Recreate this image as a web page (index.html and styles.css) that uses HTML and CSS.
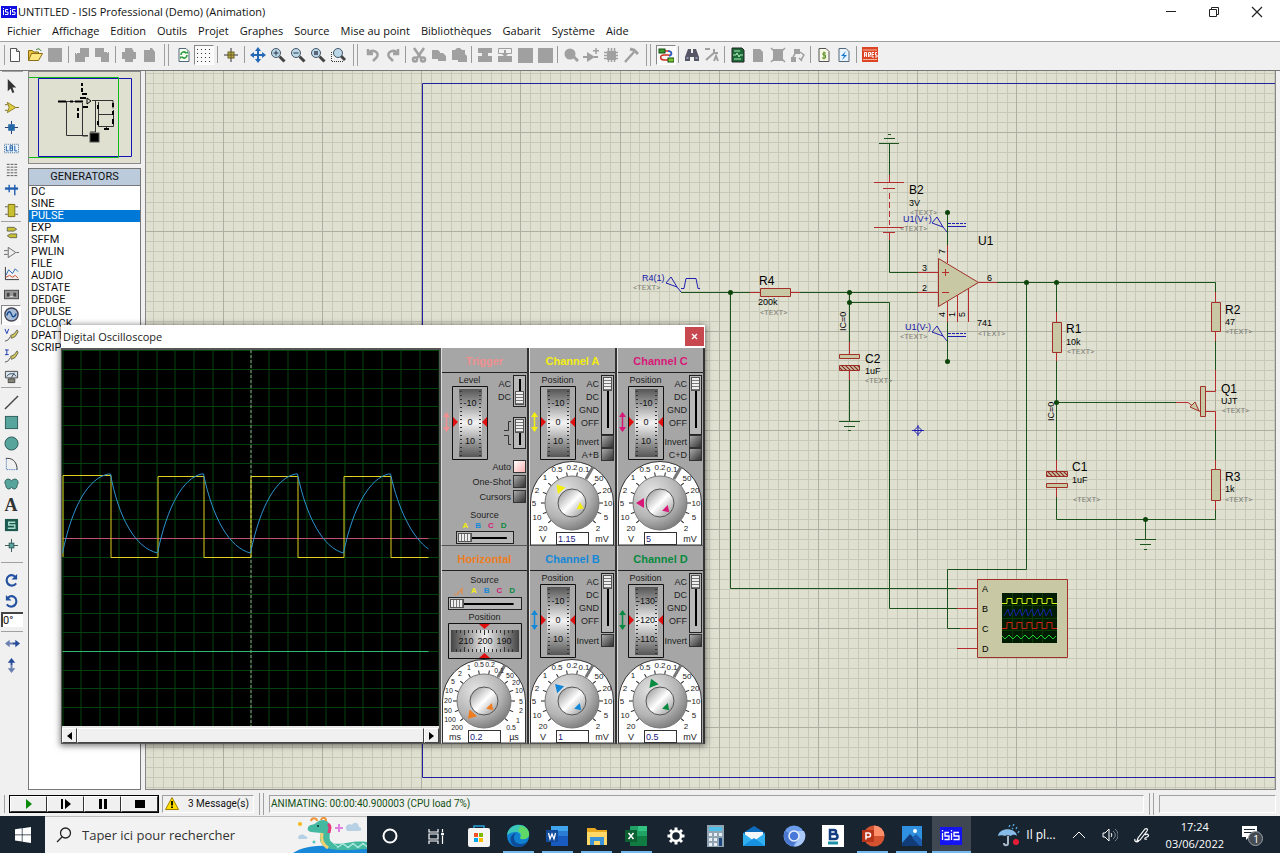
FILE: index.html
```
<!DOCTYPE html>
<html lang="fr">
<head>
    <meta charset="UTF-8">
    <meta name="viewport" content="width=device-width, initial-scale=1.0">
    <title>UNTITLED - ISIS Professional</title>
    <link rel="stylesheet" href="styles.css">
</head>
<body>
    <header class="titlebar">
        <svg class="app-icon" width="16" height="12" viewBox="0 0 16 12"><rect width="16" height="12" fill="#1010e0"/><path d="M2.5 4v5M2.5 2v1M7 3.500H4.500v2.500H7v2.500H4M9.500 4v5M9.500 2v1M14.500 3.500H11.500v2.500h2.500v2.500H11" fill="none" stroke="#fff"/></svg>
        <h1>UNTITLED - ISIS Professional (Demo) (Animation)</h1>
        <div class="window-buttons">
            <button aria-label="Réduire"><svg width="12" height="12"><path d="M1 5.500h10" stroke="#222"/></svg></button>
            <button aria-label="Restaurer"><svg width="12" height="12"><path d="M1.500 3.500h7v7h-7zM3.500 3V1.500h7v7H9" fill="none" stroke="#222"/></svg></button>
            <button aria-label="Fermer"><svg width="12" height="12"><path d="M1 1l10 10M11 1L1 11" stroke="#222" stroke-width="1.200"/></svg></button>
        </div>
    </header>

    <nav class="menubar">
        <button>Fichier</button>
        <button>Affichage</button>
        <button>Edition</button>
        <button>Outils</button>
        <button>Projet</button>
        <button>Graphes</button>
        <button>Source</button>
        <button>Mise au point</button>
        <button>Bibliothèques</button>
        <button>Gabarit</button>
        <button>Système</button>
        <button>Aide</button>
    </nav>

    <div class="toolbar">
        <div class="tools">
            <button aria-label="Nouveau"><svg viewBox="0 0 16 16"><path d="M3.500 1.500h6l3 3v10h-9z" fill="#fff" stroke="#555"/><path d="M9.500 1.500v3h3" fill="#ddd" stroke="#555"/></svg></button>
            <button aria-label="Ouvrir"><svg viewBox="0 0 16 16"><path d="M1.500 13.500v-10h4l1 1.500h5v2" fill="#e8c040" stroke="#8a6d10"/><path d="M1.500 13.500l3-7h11l-4 7z" fill="#ffe680" stroke="#8a6d10"/><path d="M9 3c2-2 4-1 5 1" fill="none" stroke="#2a6d2a"/></svg></button>
            <button aria-label="Enregistrer"><svg viewBox="0 0 16 16"><path d="M1 1h14v14H2l-1-1z" fill="#a0a0a0"/></svg></button>
            <i class="sep"></i>
            <button aria-label="Importer"><svg viewBox="0 0 16 16" fill="#a0a0a0"><path d="M6 1h9v9h-4v5H1V6h5z"/><path d="M5 4l-3 3" stroke="#f0f0f0"/></svg></button>
            <button aria-label="Exporter"><svg viewBox="0 0 16 16" fill="#a0a0a0"><path d="M1 1h9v4h5v10H7v-5H1z"/><path d="M11 3l3 3" stroke="#f0f0f0"/></svg></button>
            <i class="sep"></i>
            <button aria-label="Imprimer"><svg viewBox="0 0 16 16" fill="#a0a0a0"><path d="M4 1h7l2 4h2v7h-3v3H4v-3H1V5h3z"/></svg></button>
            <button aria-label="Zone"><svg viewBox="0 0 16 16" fill="#a0a0a0"><path d="M3 3h6V1h2l3 4v10H3z"/></svg></button>
        </div>
        <i class="grip"></i>
        <div class="tools">
            <button aria-label="Redessiner"><svg viewBox="0 0 16 16"><path d="M3 1.500h7l3 3v10H3z" fill="#f4fff4" stroke="#567"/><path d="M5 8c0-3 3-4 5-2M11 8c0 3-3 4-5 2" fill="none" stroke="#2c9a3a" stroke-width="1.600"/><path d="M9 6.500h3V4zM7 9.500H4V12z" fill="#2c9a3a"/></svg></button>
            <button class="pressed" aria-label="Grille"><svg viewBox="0 0 16 16"><path d="M1 2.500h15M1 6.500h15M1 10.500h15M1 14.500h15" stroke="#333" stroke-dasharray="1 3"/></svg></button>
            <i class="sep"></i>
            <button aria-label="Origine"><svg viewBox="0 0 16 16"><path d="M8 1v14M1 8h14" stroke="#333"/><rect x="5" y="5" width="6" height="6" fill="#b8a848" stroke="#6a6020"/><path d="M8 5v6M5 8h6" stroke="#6a6020"/></svg></button>
            <i class="sep"></i>
            <button aria-label="Centrer"><svg viewBox="0 0 16 16" fill="#2468b8"><path d="M8 0l3 4H9v3h3V5l4 3-4 3V9H9v3h2l-3 4-3-4h2V9H4v2L0 8l4-3v2h3V4H5z"/></svg></button>
            <button aria-label="Zoom avant"><svg viewBox="0 0 16 16"><path d="M9.500 9.500l5 5" stroke="#444" stroke-width="3"/><circle cx="6" cy="6" r="4.500" fill="#bcd8e8" stroke="#456"/><path d="M6 3.500v5M3.500 6h5" stroke="#234"/></svg></button>
            <button aria-label="Zoom arrière"><svg viewBox="0 0 16 16"><path d="M9.500 9.500l5 5" stroke="#444" stroke-width="3"/><circle cx="6" cy="6" r="4.500" fill="#bcd8e8" stroke="#456"/><path d="M3.500 6h5" stroke="#234"/></svg></button>
            <button aria-label="Zoom tout"><svg viewBox="0 0 16 16"><path d="M9.500 9.500l5 5" stroke="#444" stroke-width="3"/><circle cx="6" cy="6" r="4.500" fill="#bcd8e8" stroke="#456"/><rect x="4" y="4" width="4" height="4" fill="#567"/></svg></button>
            <button aria-label="Zoom zone"><svg viewBox="0 0 16 16"><path d="M1.500 5v9.500H13" fill="none" stroke="#333" stroke-dasharray="1 1"/><path d="M11 9l4 4" stroke="#444" stroke-width="3"/><circle cx="8" cy="6" r="4.500" fill="#bcd8e8" stroke="#456"/></svg></button>
        </div>
        <i class="grip"></i>
        <div class="tools tight">
            <button aria-label="Annuler"><svg viewBox="0 0 16 16" fill="none" stroke="#a0a0a0" stroke-width="2.500"><path d="M3 2v5h5M3 7c4-6 12-2 9 3l-4 4"/></svg></button>
            <button aria-label="Rétablir"><svg viewBox="0 0 16 16" fill="none" stroke="#a0a0a0" stroke-width="2.500"><path d="M13 2v5H8M13 7C9 1 1 5 4 10l4 4"/></svg></button>
            <i class="sep"></i>
            <button aria-label="Couper"><svg viewBox="0 0 16 16" fill="none" stroke="#a0a0a0" stroke-width="2.500"><path d="M3 1l7 10M13 1L6 11"/><circle cx="4" cy="12.500" r="2"/><circle cx="12" cy="12.500" r="2"/></svg></button>
            <button aria-label="Copier"><svg viewBox="0 0 16 16" fill="#a0a0a0"><path d="M1 3h6l2 2v1h3l3 3v5H7v-2H1z"/></svg></button>
            <button aria-label="Coller"><svg viewBox="0 0 16 16" fill="#a0a0a0"><path d="M1 3h3l2-2h3l2 2h3v4l2 2v6H7v-2H1z"/></svg></button>
            <i class="sep"></i>
            <button aria-label="Bloc copier"><svg viewBox="0 0 16 16" fill="#a0a0a0"><path d="M1 1h14v5h-4v3h4v6H1V9h4V6H1z"/></svg></button>
            <button aria-label="Bloc déplacer"><svg viewBox="0 0 16 16" fill="#a0a0a0"><path d="M1.500 1.500h13v5h-13z" fill="none" stroke="#a0a0a0"/><path d="M7 3h2v3h3L9 9h6v6H1V9h6L4 6h3z"/></svg></button>
            <button aria-label="Bloc tourner"><svg viewBox="0 0 16 16" fill="#a0a0a0"><path d="M1 1h15v15H1z"/></svg></button>
            <button aria-label="Bloc effacer"><svg viewBox="0 0 16 16" fill="#a0a0a0"><path d="M1 1h15v15H1z"/></svg></button>
            <i class="sep"></i>
            <button aria-label="Prendre"><svg viewBox="0 0 16 16" fill="#a0a0a0"><circle cx="7" cy="7" r="5.500"/><path d="M10 9l5 5" stroke="#a0a0a0" stroke-width="3"/></svg></button>
            <button aria-label="Créer"><svg viewBox="0 0 16 16" fill="#a0a0a0"><path d="M4 5l8 5-8 5zM0 9h4v2H0zM11 9h4v2h-4zM10 3h6v1.500h-6zM12.300 1h1.500v6h-1.500z"/></svg></button>
            <button aria-label="Empreinte"><svg viewBox="0 0 16 16" fill="#a0a0a0"><path d="M4 4h9v9H4z"/><path d="M5.500 1v14M8.500 1v14M11.500 1v14M1 5.500h14M1 8.500h14M1 11.500h14" stroke="#a0a0a0" stroke-width="1.500"/></svg></button>
            <button aria-label="Décomposer"><svg viewBox="0 0 16 16" fill="none" stroke="#a0a0a0"><path d="M2 15L11 5" stroke-width="2.500"/><path d="M7 2l4 1 4 4" stroke-width="3"/></svg></button>
        </div>
        <i class="grip"></i>
        <div class="tools tight">
            <button class="pressed" aria-label="Routage"><svg viewBox="0 0 16 16"><path d="M5 4h5c5 0 4 5 0 4H6c-5 0-4 5 0 5h5" fill="none" stroke="#d03020" stroke-width="1.500"/><path d="M10 4c4 0 5 4 1 5" fill="none" stroke="#2060d0" stroke-width="1.500"/><rect x="1" y="2" width="6" height="4" fill="#3a9a30" stroke="#174a10"/><rect x="10" y="11" width="6" height="4" fill="#7ac830" stroke="#174a10"/></svg></button>
            <i class="sep"></i>
            <button aria-label="Chercher"><svg viewBox="0 0 16 16" fill="#556"><path d="M4 2h3v4h2V2h3l3 8v4h-5v-4H6v4H1v-4z"/><path d="M2.500 11h2M11.500 11h2" stroke="#cde"/></svg></button>
            <button aria-label="Propriétés"><svg viewBox="0 0 16 16" fill="none" stroke="#a0a0a0" stroke-width="2"><path d="M2 13L11 5M10 2v4h4M1 2h5M10 14l2-5 2 5"/></svg></button>
            <i class="sep"></i>
            <button aria-label="Explorer"><svg viewBox="0 0 16 16"><path d="M2 1h10l2 2v12H2z" fill="#1c6a38" stroke="#222"/><path d="M4 4h6M4 12h7M3 8h3l1-2 2 4 1-2h3" fill="none" stroke="#aef0b8"/></svg></button>
            <button aria-label="Feuille"><svg viewBox="0 0 16 16" fill="#a0a0a0"><path d="M3 2h7l3 3v10H3z"/></svg></button>
            <button aria-label="Supprimer feuille"><svg viewBox="0 0 16 16" fill="#a0a0a0"><path d="M3 2h10v12H3z"/><path d="M1 1l14 14M15 1L1 15" stroke="#a0a0a0" stroke-width="1.500"/></svg></button>
            <button aria-label="Parent"><svg viewBox="0 0 16 16" fill="#a0a0a0"><path d="M1 10h5v5H1zM4 2h6v5H4z"/><path d="M3 10l3-5M10 5l4 3-3 5M9 11l3 3" fill="none" stroke="#a0a0a0" stroke-width="1.500"/></svg></button>
            <i class="sep"></i>
            <button aria-label="Nomenclature"><svg viewBox="0 0 16 16"><path d="M3 1.500h7l3 3v10H3z" fill="#f8f8e8" stroke="#555"/><path d="M10 6H7v2h2.500v3H6M8 4.500v8" fill="none" stroke="#5a9020"/></svg></button>
            <button aria-label="Règles électriques"><svg viewBox="0 0 16 16"><path d="M3 1.500h7l3 3v10H3z" fill="#e8f4ff" stroke="#567"/><path d="M10 4L5 9h3l-2 4 5-5H8z" fill="#1878d0"/></svg></button>
            <i class="sep"></i>
            <button aria-label="ARES"><svg viewBox="0 0 16 16"><rect width="16" height="15" fill="#dc4424"/><path d="M1 3h14M1 12.500h14" stroke="#f8b8a0"/><path d="M2.500 10V5.500h2V10M2.500 8h2M6.500 10V5.500h2V8h-2l2 2M12 5.500h-2V10h2M10 7.500h2M15 5.500h-1.500V8H15v2h-2" fill="none" stroke="#fff"/></svg></button>
        </div>
    </div>

    <main class="workspace">
        <aside class="modes">
            <div class="mode-group">
                <button aria-label="Sélection"><svg viewBox="0 0 16 16"><path d="M4 0v13l3-3 2 5 2-1-2-5h4z" fill="#333"/></svg></button>
                <button aria-label="Composant"><svg viewBox="0 0 16 16"><path d="M1 5h3M1 11h3M12 8h4" stroke="#776a20"/><path d="M3.500 2.500l9 5.500-9 5.500 2-5.500z" fill="#e0d040" stroke="#8a7a20"/></svg></button>
                <button aria-label="Jonction"><svg viewBox="0 0 16 16"><path d="M8 1v14M1 8h14" stroke="#236"/><rect x="4.500" y="4.500" width="7" height="7" fill="#2468a8"/></svg></button>
                <button aria-label="Label"><svg viewBox="0 0 16 16"><path d="M.5 3.500h15v9H.5z" fill="#e8f4ff" stroke="#468" stroke-dasharray="1 1"/><path d="M2.500 5v5.500H5M6.500 5v5.500H9V5zM6.500 7.500H9M11.500 5v5.500H14" fill="none" stroke="#1858a0"/></svg></button>
                <button aria-label="Script"><svg viewBox="0 0 16 16"><path d="M3 2.500h11M3 5.500h11M3 8.500h11M3 11.500h11M3 14.500h11" stroke="#555" stroke-dasharray="3 1"/></svg></button>
                <button aria-label="Bus"><svg viewBox="0 0 16 16"><path d="M1 7h14" stroke="#2060b0" stroke-width="2.500"/><path d="M5.500 3v8M11.500 3v11" stroke="#2060b0" stroke-width="1.500"/></svg></button>
                <button aria-label="Sous-circuit"><svg viewBox="0 0 16 16"><path d="M1 4h3M1 12h3M12 4h3M12 12h3" stroke="#555"/><path d="M4.500 1.500h7v13h-7z" fill="#c8c030" stroke="#776a10"/></svg></button>
            </div>
            <div class="mode-group group-devices">
                <button aria-label="Terminal"><svg viewBox="0 0 16 16" fill="#c8c030" stroke="#665"><path d="M3.500 2.500h7l3 2-3 2h-7zM13.500 9.500h-7l-3 2 3 2h7z"/></svg></button>
                <button aria-label="Pin"><svg viewBox="0 0 16 16" fill="none" stroke="#666"><path d="M4.500 2.500l8 5.500-8 5.500zM0 6h4M0 10h4M13 8h3"/></svg></button>
                <button aria-label="Graphe"><svg viewBox="0 0 16 16" fill="none"><path d="M1.500 1v13.500H16" stroke="#333"/><path d="M2 10l3-6 4 4 3-5 3 3" stroke="#2060b0"/><path d="M2 12l4-2 3 2 3-2 3 3" stroke="#d04020"/></svg></button>
                <button aria-label="Magnétophone"><svg viewBox="0 0 16 16"><rect x=".5" y="3.500" width="15" height="9" fill="#999" stroke="#444"/><path d="M3 6h3v4H3zM10 6h3v4h-3z" fill="#444"/><path d="M6 10h4" stroke="#ddd"/></svg></button>
                <button class="pressed" aria-label="Générateur"><svg viewBox="0 0 16 16"><circle cx="8" cy="8" r="7" fill="#a8bcd8" stroke="#445" stroke-width="1.500"/><path d="M3 9c2-6 4-4 5-1s3 4 5-1" fill="none" stroke="#124a90" stroke-width="1.500"/></svg></button>
                <button aria-label="Sonde tension"><svg viewBox="0 0 16 16" fill="none"><path d="M1 1l2 5 2-5" stroke="#1838b0"/><path d="M1 14l3-1 3-4" stroke="#555"/><path d="M7 8l4-2 3-4 1 2-3 5-4 2z" fill="#d0c850" stroke="#665"/></svg></button>
                <button aria-label="Sonde courant"><svg viewBox="0 0 16 16" fill="none"><path d="M1 1h4M3 1v5M1 6h4" stroke="#1838b0"/><path d="M1 14l3-1 3-4" stroke="#555"/><path d="M7 8l4-2 3-4 1 2-3 5-4 2z" fill="#d0c850" stroke="#665"/></svg></button>
                <button aria-label="Instruments"><svg viewBox="0 0 16 16"><path d="M1.500 2.500h13v7h-13z" fill="#d8e4ec" stroke="#444"/><path d="M3 8c2-4 8-4 10 0M8 9l3-5" fill="none" stroke="#345"/><path d="M4.500 10.500h7v4h-7z" fill="#887" stroke="#444"/></svg></button>
            </div>
            <div class="mode-group group-draw">
                <button aria-label="Ligne"><svg viewBox="0 0 16 16"><path d="M1 15L15 1" stroke="#444" stroke-width="1.500"/></svg></button>
                <button aria-label="Rectangle"><svg viewBox="0 0 16 16"><rect x="1.500" y="1.500" width="13" height="13" fill="#56a49c" stroke="#2c5a58"/></svg></button>
                <button aria-label="Cercle"><svg viewBox="0 0 16 16"><circle cx="8" cy="8" r="7" fill="#56a49c" stroke="#2c5a58"/></svg></button>
                <button aria-label="Arc"><svg viewBox="0 0 16 16" fill="none"><path d="M2 2.500h2c6 0 10 5 10 12" stroke="#333"/><path d="M2.500 3v11.500H14" stroke="#2060b0" stroke-dasharray="1 1"/></svg></button>
                <button aria-label="Chemin"><svg viewBox="0 0 16 16"><path d="M8 4C5 1 1 2 1 6c0 2 1 2 1 3 0 4 4 5 6 2 2 3 6 2 6-2 0-1 1-1 1-3 0-4-4-5-7-2z" fill="#56a49c" stroke="#2c5a58"/></svg></button>
                <button class="glyph" aria-label="Texte">A</button>
                <button aria-label="Symbole"><svg viewBox="0 0 16 16"><rect x="1" y="1" width="14" height="13" fill="#1c5a50"/><path d="M12 4.500H5v3h6.500v3.500H4" fill="none" stroke="#a8e0d0" stroke-width="1.500"/></svg></button>
                <button aria-label="Marqueur"><svg viewBox="0 0 16 16"><path d="M8 1v14M1 8h14" stroke="#355"/><rect x="5.500" y="5.500" width="5" height="5" fill="#56a49c" stroke="#2c5a58"/></svg></button>
            </div>
            <div class="mode-rotate">
                <button aria-label="Rotation horaire"><svg viewBox="0 0 16 16"><path d="M12 4C7 0 2 4 3 9s7 6 10 2" fill="none" stroke="#2450a0" stroke-width="2.200"/><path d="M14 1v6H8z" fill="#2450a0"/></svg></button>
                <button aria-label="Rotation anti-horaire"><svg viewBox="0 0 16 16"><path d="M4 4c5-4 10 0 9 5s-7 6-10 2" fill="none" stroke="#2450a0" stroke-width="2.200"/><path d="M2 1v6h6z" fill="#2450a0"/></svg></button>
                <input type="text" value="0°" aria-label="Angle">
                <button class="after-angle" aria-label="Miroir horizontal"><svg viewBox="0 0 16 16"><path d="M0 8l5-4v3h3v2H5v3z" fill="#6a80b0"/><path d="M16 8l-5-4v3H8v2h3v3z" fill="#244a98"/></svg></button>
                <button aria-label="Miroir vertical"><svg viewBox="0 0 16 16"><path d="M8 0l4 5H9v3H7V5H4z" fill="#244a98"/><path d="M8 16l4-5H9V8H7v3H4z" fill="#6a80b0"/></svg></button>
            </div>
        </aside>

        <aside class="sidebar">
            <div class="overview">
                <svg width="111" height="91" viewBox="29 72 111 91" fill="none">
                    <path d="M38.500 78.500h93v78h-93z" stroke="#1414b4"/>
                    <path d="M28 77.500h90.500v80H28" stroke="#10b818"/>
                    <path d="M66.500 102v33.500H88M82.500 103v33H88M66 101.500h17M92 100.500h21v8M95.500 100v32H90M98.500 102v24.500h15V110M98 114.500h14M106.500 127v3" stroke="#333"/>
                    <path d="M58 101.500h8M70 101.500h3M75 101.500h8M78 108v3M78 113v5M82 83v3M82 88v4M82 94h5M83 107h5M98 105v4M113 103v4M113 111v4M113 119v5M98 121v4M80 98h6M104 129h5" stroke="#000" stroke-width="2"/>
                    <path d="M87 98l4 3-4 3z" stroke="#000"/>
                    <rect x="90" y="133" width="9" height="9" fill="#000" stroke="#555"/>
                </svg>
            </div>
            <h2>GENERATORS</h2>
            <ul class="device-list">
                <li>DC</li>
                <li>SINE</li>
                <li class="selected">PULSE</li>
                <li>EXP</li>
                <li>SFFM</li>
                <li>PWLIN</li>
                <li>FILE</li>
                <li>AUDIO</li>
                <li>DSTATE</li>
                <li>DEDGE</li>
                <li>DPULSE</li>
                <li>DCLOCK</li>
                <li>DPATTERN</li>
                <li>SCRIPTABLE</li>
            </ul>
        </aside>

        <section class="sheet">
            <svg class="schematic" id="schematic">
                <defs>
                    <pattern id="hatch" width="4" height="4" patternUnits="userSpaceOnUse"><path d="M0 0l4 4M-1 3l2 2M3-1l2 2" stroke="#8c2020" stroke-width="1.200"/></pattern>
                    <g id="probe"><path d="M-15-9l5-6 6 10zM-4-5l4 5"/></g>
                </defs>
                <g transform="translate(-146 -71)">
                    <path id="gridMinor" class="grid-minor"/>
                    <path id="gridMajor" class="grid-major"/>
                    <path class="sheet-edge" d="M1275.500 83.500h-853v694h853"/>

                    <!-- wires -->
                    <g class="wire">
                        <path d="M889.500 175v-31.500M879 143.500h20M884 138.500h11M888 134.500h3"/>
                        <path d="M889.500 240v32.500H918M681 292.500h69M800 292.500h118M730.500 292v296.500H957M849.500 292v50M849 302.500h40.500v306H957M849.500 380v41.500M839 421.500h21M844 426.500h11M848 430.500h3"/>
                        <path d="M947.500 212v33M947.500 322v39M997 282.500h218.500V292M1026.500 282v287.500h-79v59H960M1056.500 282v30M1056.500 361v99M1057 402.500h119"/>
                        <path d="M1215.500 341v29M1215.500 430v30M1056.500 497v22.500h159V510M1145.500 519v20.500M1135 539.500h21M1140 544.500h11M1144 549.500h3"/>
                    </g>
                    <g class="node">
                        <circle cx="730.500" cy="292.500" r="2.500"/><circle cx="849.500" cy="292.500" r="2.500"/><circle cx="849.500" cy="302.500" r="2.500"/>
                        <circle cx="947.500" cy="212.500" r="2.500"/><circle cx="947.500" cy="361.500" r="2.500"/><circle cx="1026.500" cy="282.500" r="2.500"/>
                        <circle cx="1056.500" cy="282.500" r="2.500"/><circle cx="1056.500" cy="402.500" r="2.500"/><circle cx="1145.500" cy="519.500" r="2.500"/>
                    </g>

                    <!-- component pins and bodies -->
                    <g class="pin">
                        <path d="M889.500 175v8M874 182.500h30M883 188.500h12M874 227.500h30M883 232.500h12M889.500 233v7"/>
                        <path d="M889.500 193v32" stroke-dasharray="6 3"/>
                        <path d="M918 272.500h20M918 292.500h20M978 282.500h19M947.500 245v18M947.500 301v21M957.500 295v27M968.500 288v34"/>
                        <path d="M750 292.500h10M790 292.500h10M849.500 342v12M849.500 370v10M1056.500 312v10M1056.500 352v9M1056.500 460v11M1056.500 487v10"/>
                        <path d="M1215.500 292v10M1215.500 331v10M1215.500 460v9M1215.500 500v10M1215.500 370v21.500H1206M1206 411.500h9.500V430M1176 402.500h12l12 9"/>
                        <path d="M957 588.500h20M957 608.500h20M960 628.500h17M957 648.500h20"/>
                    </g>
                    <g class="body">
                        <path d="M938.500 258.500l40 24-40 24z"/>
                        <path d="M760.500 288.500h30v8h-30zM1052.500 322.500h9v30h-9zM1211.500 302.500h9v29h-9zM1211.500 469.500h9v31h-9zM1200.500 386.500h5v30h-5z"/>
                        <path d="M839.500 354.500h20v4h-20zM839.500 365.500h20v5h-20zM1046.500 471.500h21v5h-21zM1046.500 483.500h21v4h-21z"/>
                        <path d="M1190 407l5-5 4 9z"/>
                        <path d="M977.500 579.500h90v78h-90z"/>
                    </g>
                    <path class="hatched" d="M839.500 365.500h20v5h-20zM1046.500 471.500h21v5h-21z"/>
                    <path class="pin" d="M942 272.500h7M945.500 269v7M942 292.500h7"/>

                    <!-- generators and origin marker -->
                    <g class="generator">
                        <use href="#probe" x="681" y="292"/><use href="#probe" x="947" y="232"/><use href="#probe" x="947" y="341"/>
                        <path d="M681 288.500h3l2-10h10l2 10h2M948 226.500h18M948 336.500h18"/>
                        <path d="M948 223.500h18M948 333.500h18" stroke-dasharray="3 1"/>
                        <path d="M918 425v11M912 430.500h12M914 430.500l4-4 4 4-4 4z"/>
                    </g>

                    <!-- virtual scope -->
                    <rect x="1002" y="593" width="55" height="50" fill="#001c00"/>
                    <path d="M1002 605.500h55M1002 618.500h55M1002 630.500h55M1012.500 593v50M1022.500 593v50M1032.500 593v50M1042.500 593v50" stroke="#0a3c0a"/>
                    <g fill="none">
                        <path d="M1002 603.500h5v-5h5v5h5v-5h5v5h5v-5h5v5h5v-5h5v5h5v-5h5v5h5" stroke="#d8f010"/>
                        <path d="M1004 616l4-7 2 7 4-7 2 7 4-7 2 7 4-7 2 7 4-7 2 7 4-7 2 7 4-7 2 7 4-7 2 7" stroke="#1420a8"/>
                        <path d="M1002 628.500h5v-6h5v6h5v-6h5v6h5v-6h5v6h5v-6h5v6h5v-6h5v6h5" stroke="#d02010"/>
                        <path d="M1002 636l3 3 4-4 4 4 4-4 4 4 4-4 4 4 4-4 4 4 4-4 4 4 4-4 4 4 3-3" stroke="#20d030"/>
                    </g>

                    <g class="ref">
                        <text x="909" y="194">B2</text><text x="978" y="245">U1</text><text x="759" y="285">R4</text><text x="865" y="363">C2</text>
                        <text x="1066" y="333">R1</text><text x="1225" y="314">R2</text><text x="1221" y="393">Q1</text><text x="1072" y="471">C1</text><text x="1225" y="481">R3</text>
                    </g>
                    <g class="value">
                        <text x="909" y="206">3V</text><text x="758" y="305">200k</text><text x="865" y="374">1uF</text><text x="977" y="326">741</text>
                        <text x="1066" y="345">10k</text><text x="1225" y="325">47</text><text x="1221" y="404">UJT</text><text x="1072" y="483">1uF</text><text x="1225" y="492">1k</text>
                        <text x="922" y="271">3</text><text x="922" y="291">2</text><text x="987" y="281">6</text>
                        <text x="982" y="592">A</text><text x="982" y="612">B</text><text x="982" y="632">C</text><text x="982" y="652">D</text>
                        <text transform="translate(846 331) rotate(-90)">IC=0</text><text transform="translate(1054 421) rotate(-90)">IC=0</text>
                        <text transform="translate(945 254) rotate(-90)">7</text><text transform="translate(945 317) rotate(-90)">4</text>
                        <text transform="translate(955 317) rotate(-90)">1</text><text transform="translate(965 317) rotate(-90)">5</text>
                    </g>
                    <g class="prop">
                        <text x="910" y="215">&lt;TEXT&gt;</text><text x="900" y="231">&lt;TEXT&gt;</text><text x="900" y="339">&lt;TEXT&gt;</text><text x="633" y="290">&lt;TEXT&gt;</text>
                        <text x="760" y="315">&lt;TEXT&gt;</text><text x="865" y="383">&lt;TEXT&gt;</text><text x="978" y="336">&lt;TEXT&gt;</text><text x="1067" y="354">&lt;TEXT&gt;</text>
                        <text x="1225" y="334">&lt;TEXT&gt;</text><text x="1222" y="413">&lt;TEXT&gt;</text><text x="1073" y="502">&lt;TEXT&gt;</text><text x="1225" y="502">&lt;TEXT&gt;</text>
                    </g>
                    <g class="net">
                        <text x="642" y="281">R4(1)</text><text x="903" y="222">U1(V+)</text><text x="905" y="330">U1(V-)</text>
                    </g>
                </g>
            </svg>
        </section>
    </main>

    <footer class="statusbar">
        <i class="grip-small"></i>
        <div class="transport">
            <button aria-label="Lecture"><svg width="10" height="10"><path d="M2 0l6 5-6 5z" fill="#0a8a0a"/></svg></button>
            <button aria-label="Pas à pas"><svg width="12" height="10"><path d="M1 0h2v10H1zM5 0l6 5-6 5z"/></svg></button>
            <button aria-label="Pause"><svg width="10" height="10"><path d="M1 0h3v10H1zM6 0h3v10H6z"/></svg></button>
            <button aria-label="Stop"><svg width="10" height="10"><path d="M0 1h10v8H0z"/></svg></button>
        </div>
        <div class="status-box messages">
            <svg width="14" height="13" viewBox="0 0 14 13"><path d="M7 .5l6.500 12H.5z" fill="#ffe000" stroke="#a08000"/><path d="M7 4v4.500M7 9.500v1.500" stroke="#000" stroke-width="1.800"/></svg>
            <span>3 Message(s)</span>
        </div>
        <i class="grip"></i>
        <div class="status-box animation">ANIMATING: 00:00:40.900003 (CPU load 7%)</div>
        <i class="grip"></i>
        <div class="status-box coords"></div>
    </footer>

    <!-- Windows taskbar -->
    <div class="taskbar">
        <button class="start" aria-label="Démarrer"><svg width="16" height="16" fill="#fff"><path d="M0 2.300l6.800-1v6.200H0zM7.500 1.200L16 0v7.500H7.500zM0 8.300h6.800v6.200L0 13.600zM7.500 8.300H16V16l-8.500-1.200z"/></svg></button>
        <div class="search">
            <svg width="16" height="16" viewBox="0 0 16 16" fill="none" stroke="#222" stroke-width="1.300"><circle cx="9.500" cy="6" r="5"/><path d="M6 10l-5 5"/></svg>
            <input type="text" placeholder="Taper ici pour rechercher" aria-label="Rechercher">
            <svg class="doodle" width="74" height="36" viewBox="0 0 74 36">
                <circle cx="7" cy="7" r="2" fill="#f4b81c"/>
                <path d="M5 21c0-3 5-5 7-2 3 0 3 3 1 3H6zM53 12c-1-4 4-6 6-4 2-4 7-2 7 2 3 0 3 4 0 4H54z" fill="#b8d0e4"/>
                <path d="M46 7v8M42 11h8" stroke="#e080e0" stroke-width="2"/>
                <circle cx="21" cy="25" r="1.500" fill="#50c8c0"/>
                <path d="M0 36c10-7 26-8 46-7l28 2v5z" fill="#1888d8"/>
                <path d="M16 9c2-2 6-1 8-4 5-4 12-2 13 4 1 8-3 14 3 17 8 3 18-3 34-1v7c-16 1-32 2-40-1-8-4-8-10-6-15l-10-1c-4-1-4-4-2-6z" fill="#45b8a0"/>
                <path d="M29 16c-1 7 0 11 6 15" fill="none" stroke="#f0d070" stroke-width="3"/>
                <path d="M35 7c4 3 1 6 1 9" fill="none" stroke="#e03878" stroke-width="3"/>
                <path d="M18 4c1-4 6-3 6 0M28 3c1-3 5-3 5 1" fill="none" stroke="#f09030" stroke-width="2"/>
                <path d="M40 26l5 4 5-4 5 4 5-4 5 4 5-4 4 3M44 31l6-4 5 4 5-4 5 4 5-4 4 3" fill="none" stroke="#b0ece0"/>
                <circle cx="25" cy="9" r="1" fill="#123"/>
            </svg>
        </div>
        <div class="apps">
            <button class="wide" aria-label="Cortana"><svg viewBox="0 0 24 24"><circle cx="12" cy="12" r="6.500" fill="none" stroke="#fff" stroke-width="2"/></svg></button>
            <button class="wide" aria-label="Affichage des tâches"><svg viewBox="0 0 24 24" fill="none" stroke="#fff" stroke-width="1.200"><path d="M5 5v3h9V5M5 10h9v5H5zM5 20v-3h9v3M18.500 5v3M18.500 12v8"/><circle cx="18.500" cy="10" r="1" fill="#fff"/></svg></button>
            <button aria-label="Store"><svg viewBox="0 0 24 24"><path d="M7 5V2h10v3" fill="none" stroke="#28a0d8" stroke-width="1.500"/><rect x="1" y="4" width="22" height="19" rx="2" fill="#f4f4f4"/><path d="M7 9h4v4H7z" fill="#f25022"/><path d="M12 9h4v4h-4z" fill="#7fba00"/><path d="M7 14h4v4H7z" fill="#00a4ef"/><path d="M12 14h4v4h-4z" fill="#ffb900"/></svg></button>
            <button class="running" aria-label="Edge"><svg viewBox="0 0 24 24"><circle cx="12" cy="12" r="11" fill="#1080d0"/><path d="M1 11C3-3 23-2 23 10c0 5-7 6-9 4 2-3-1-6-4-6-5 0-8 2-9 3z" fill="#3cc8b8"/><path d="M14 2c8 1 10 7 9 10-2 4-8 4-9 2 3-4 0-6-2-7z" fill="#60d868"/><path d="M10 9c-4 4-2 11 5 11 3 0 5-1 7-3-3 6-10 8-15 4-5-5-2-11 3-12z" fill="#0c4c98"/></svg></button>
            <button class="running" aria-label="Word"><svg viewBox="0 0 24 24"><rect x="6" y="2" width="17" height="20" rx="1" fill="#2b7cd3"/><path d="M6 12h17v9a1 1 0 0 1-1 1H6z" fill="#185abd"/><path d="M6 2h17v5H6z" fill="#41a5ee"/><rect x="1" y="6" width="12" height="12" fill="#124a9c"/><path d="M3.500 9l1.500 6 2-5 2 5 1.500-6" fill="none" stroke="#fff" stroke-width="1.300"/></svg></button>
            <button class="running" aria-label="Explorateur"><svg viewBox="0 0 24 24"><path d="M2 4h8l2 2h10v15H2z" fill="#e8a820"/><path d="M2 8h20v13H2z" fill="#ffd868"/><path d="M5 21v-8h14v8h-4v-4H9v4z" fill="#3c94d8"/></svg></button>
            <button class="running" aria-label="Excel"><svg viewBox="0 0 24 24"><rect x="6" y="2" width="17" height="20" rx="1" fill="#21a366"/><path d="M6 12h17v10H6z" fill="#107c41"/><path d="M14 2h9v5h-9z" fill="#33c481"/><rect x="1" y="6" width="12" height="12" fill="#0c6032"/><path d="M4.500 9l5 6M9.500 9l-5 6" stroke="#fff" stroke-width="1.500"/></svg></button>
            <button aria-label="Paramètres"><svg viewBox="0 0 24 24" fill="none" stroke="#fff"><circle cx="12" cy="12" r="5" stroke-width="2.500"/><path d="M12 3.500v3M12 17.500v3M3.500 12h3M17.500 12h3M6 6l2 2M16 16l2 2M18 6l-2 2M8 16l-2 2" stroke-width="3"/></svg></button>
            <button aria-label="Calculatrice"><svg viewBox="0 0 24 24"><rect x="4" y="1" width="17" height="22" fill="#90a4b4"/><path d="M6 3h13v4H6z" fill="#50c0e8"/><path d="M6 9h3v3H6zM11 9h3v3h-3zM16 9h3v3h-3zM6 14h3v3H6zM11 14h3v3h-3zM6 19h3v3H6zM11 19h3v3h-3z" fill="#e8eef4"/><path d="M16 14h3v8h-3z" fill="#204880"/></svg></button>
            <button aria-label="Courrier"><svg viewBox="0 0 24 24"><path d="M1 9l11-7 11 7v13H1z" fill="#0f6cbd"/><path d="M3 8h18v10H3z" fill="#f4f8fc"/><path d="M1 9l11 8 11-8v13H1z" fill="#30b0f0"/><path d="M1 22l11-8 11 8z" fill="#1890e0"/></svg></button>
            <button aria-label="Chromium"><svg viewBox="0 0 24 24"><circle cx="12" cy="12" r="10.500" fill="#6c9cec"/><path d="M3 7a10.500 10.500 0 0 0 8 15l5-8z" fill="#4a78d0"/><path d="M12 7h10a10.500 10.500 0 0 1-10 15.500l5-8z" fill="#a8c8f8"/><circle cx="12" cy="12" r="5" fill="#4878d8" stroke="#e8f0fc" stroke-width="1.500"/></svg></button>
            <button aria-label="Base"><svg viewBox="0 0 24 24"><rect x="1" y="1" width="22" height="22" fill="#fff"/><path d="M9 6h4a2 2 0 0 1 0 4H9zM9 10h5a2 2 0 0 1 0 5H9z" fill="none" stroke="#143c80" stroke-width="2.500"/><path d="M7 19h10" stroke="#1a90a8" stroke-width="3"/></svg></button>
            <button class="running" aria-label="PowerPoint"><svg viewBox="0 0 24 24"><circle cx="13" cy="12" r="10.500" fill="#d35230"/><path d="M13 1.500A10.500 10.500 0 0 1 23.500 12H13z" fill="#ff8f6b"/><rect x="1" y="6" width="12" height="12" fill="#b7351a"/><path d="M5 15.500V9h2.500a2 2 0 0 1 0 4H5" fill="none" stroke="#fff" stroke-width="1.500"/></svg></button>
            <button class="running" aria-label="Photos"><svg viewBox="0 0 24 24"><rect x="2" y="2" width="20" height="20" fill="#3090e0"/><path d="M2 19l8-9 12 12H2z" fill="#123c78"/><path d="M12 14l4-4 6 6v6h-2z" fill="#1c5cac"/><circle cx="15" cy="7" r="2" fill="#fff"/></svg></button>
            <button class="running current" aria-label="ISIS"><svg viewBox="0 0 24 24"><rect x="1" y="3" width="22" height="18" fill="#1414f0"/><path d="M3.500 9v7M3.500 6v1.500M10 8.500H6v3.500h4v3.500H5.500M12.500 9v7M12.500 6v1.500M20 8.500h-5V12h5v3.500h-5.500" fill="none" stroke="#fff" stroke-width="1.300"/></svg></button>
        </div>
        <div class="tray">
            <button class="weather"><svg width="22" height="24" viewBox="0 0 22 24"><path d="M0 13C1 4 18 4 19 13c-3-2-5-1-6 0-2-1-5-1-6 0-2-1-5-1-7 0z" fill="#88bce8"/><path d="M10 13v7c0 3-4 3-4 0" fill="none" stroke="#a8b8c8" stroke-width="2"/><path d="M12 2l-1 2M16 1l-1 2M19 4l-1 2M21 8l-1 2M15 5l-1 1" stroke="#58a8e0" stroke-width="1.300"/><circle cx="18" cy="19" r="3" fill="#e81c38"/></svg><span>Il pl...</span></button>
            <button class="tray-icon" aria-label="Icônes cachées"><svg width="14" height="14"><path d="M1 10l6-6 6 6" fill="none" stroke="#fff"/></svg></button>
            <button class="tray-icon speaker" aria-label="Volume"><svg width="16" height="14" fill="none" stroke="#fff"><path d="M1 5h2l4-4v12L3 9H1zM9 5c1 1 1 3 0 4"/><path d="M11 3c3 2 3 6 0 8M13 1c4 3 4 9 0 12" stroke="#7c8894"/></svg></button>
            <button class="tray-icon pen" aria-label="Stylet"><svg width="16" height="16" fill="none" stroke="#fff" stroke-width="1.200"><path d="M4 11l7-9c2-1 3 0 2 2l-7 9-3 1zM1 12c-1 3 3 4 4 1M11 8c3-2 5 1 2 2s-3 3 0 2"/></svg></button>
            <time class="clock"><span>17:24</span><span>03/06/2022</span></time>
            <button class="notifications" aria-label="Notifications"><svg width="24" height="24" viewBox="0 0 24 24"><path d="M2 3h15v11h-8l-3 3v-3H2z" fill="#fff"/><path d="M4 6.500h11M4 9.500h11" stroke="#182430"/><circle cx="15.500" cy="15.500" r="7" fill="#444b52" stroke="#9aa0a6"/><text x="13" y="20">1</text></svg></button>
        </div>
    </div>

    <!-- Digital oscilloscope window -->
    <section class="scope">
        <header class="scope-title">
            <h2>Digital Oscilloscope</h2>
            <button aria-label="Fermer"><svg width="7" height="7"><path d="M1 1l5 5M6 1L1 6" stroke="#fff" stroke-width="1.400"/></svg></button>
        </header>
        <div class="scope-body">
            <div class="display">
                <svg class="trace" viewBox="62 350 376 376" fill="none">
                    <path id="scopeGrid" stroke="#06420c"/>
                    <path d="M250.500 350v376" stroke="#999" stroke-dasharray="3 2"/>
                    <path d="M62 538.500h366" stroke="#c05078"/>
                    <path d="M62 651.500h366" stroke="#30b870"/>
                    <path d="M62.500 557V475.500H110.500V557.500H157.500V476.500H203.500V557.500H250.500V476.500H297.500V557.500H343.500V476.500H390.500V557.500H428" stroke="#e0d020"/>
                    <path d="M62 553C72 505 88 478 108 474L110 474C118 518 135 548 157 553C167 505 183 478 201 474L203 474C212 518 229 548 250 553C260 505 276 478 295 474L297 474C306 518 323 548 343 553C353 505 370 478 388 474L390 474C398 510 412 538 428 549" stroke="#2c94d0"/>
                </svg>
                <div class="scrollbar">
                    <button aria-label="Gauche"><svg width="5" height="8"><path d="M5 0v8L0 4z"/></svg></button>
                    <div class="thumb"></div>
                    <button aria-label="Droite"><svg width="5" height="8"><path d="M0 0v8l5-4z"/></svg></button>
                </div>
            </div>

            <div class="panels">
                <section class="panel trigger">
                    <h3>Trigger</h3>
                    <div class="controls">
                        <div class="position">
                            <span class="caption">Level</span>
                            <svg class="wheel" data-labels="-10,0,10"></svg>
                        </div>
                        <div class="coupling">
                            <div class="switch-row">
                                <div class="marks"><span>AC</span><span>DC</span></div>
                                <input class="switch short" type="range" min="0" max="1" value="1" aria-label="Couplage">
                            </div>
                            <div class="switch-row edge">
                                <svg width="8" height="26" viewBox="0 0 8 26" fill="none" stroke="#333"><path d="M8 1.500H5.500v9H1M1 15.500h4.500v9H8"/></svg>
                                <input class="switch short" type="range" min="0" max="1" value="0" aria-label="Front">
                            </div>
                        </div>
                    </div>
                    <div class="trigger-modes">
                        <label>Auto<input type="checkbox" checked></label>
                        <label>One-Shot<input type="checkbox"></label>
                        <label>Cursors<input type="checkbox"></label>
                    </div>
                    <div class="source">
                        <span class="caption">Source</span>
                        <div class="letters"><b class="a">A</b><b class="b">B</b><b class="c">C</b><b class="d">D</b></div>
                        <input class="source-slider" type="range" min="0" max="3" value="0" aria-label="Source">
                    </div>
                </section>

                <section class="panel a">
                    <h3>Channel A</h3>
                    <div class="controls">
                        <div class="position">
                            <span class="caption">Position</span>
                            <svg class="wheel" data-labels="-10,0,10"></svg>
                        </div>
                        <div class="coupling">
                            <div class="switch-row">
                                <div class="marks"><span>AC</span><span>DC</span><span>GND</span><span>OFF</span></div>
                                <input class="switch" type="range" min="0" max="3" value="0" aria-label="Couplage A">
                            </div>
                            <label>Invert<input type="checkbox"></label>
                            <label>A+B<input type="checkbox"></label>
                        </div>
                    </div>
                    <div class="dial">
                        <svg class="knob" data-coarse="-40" data-fine="115"></svg>
                        <div class="readout"><span>V</span><input type="text" value="1.15" aria-label="Gain A"><span>mV</span></div>
                    </div>
                </section>

                <section class="panel c">
                    <h3>Channel C</h3>
                    <div class="controls">
                        <div class="position">
                            <span class="caption">Position</span>
                            <svg class="wheel" data-labels="-10,0,10"></svg>
                        </div>
                        <div class="coupling">
                            <div class="switch-row">
                                <div class="marks"><span>AC</span><span>DC</span><span>GND</span><span>OFF</span></div>
                                <input class="switch" type="range" min="0" max="3" value="0" aria-label="Couplage C">
                            </div>
                            <label>Invert<input type="checkbox"></label>
                            <label>C+D<input type="checkbox"></label>
                        </div>
                    </div>
                    <div class="dial">
                        <svg class="knob" data-coarse="-90" data-fine="135"></svg>
                        <div class="readout"><span>V</span><input type="text" value="5" aria-label="Gain C"><span>mV</span></div>
                    </div>
                </section>

                <section class="panel horizontal">
                    <h3>Horizontal</h3>
                    <div class="timebase">
                        <span class="caption">Source</span>
                        <div class="letters"><svg width="10" height="8"><path d="M0 7.500h3l5-6v6" fill="none" stroke="#d89058" stroke-width="1.500"/></svg><b class="a">A</b><b class="b">B</b><b class="c">C</b><b class="d">D</b></div>
                        <input class="source-slider long" type="range" min="0" max="4" value="0" aria-label="Source horizontale">
                        <span class="caption">Position</span>
                        <svg class="wheel-flat" width="74" height="36" viewBox="0 0 74 36">
                            <defs><linearGradient id="flat"><stop offset="0" stop-color="#444"/><stop offset=".5" stop-color="#eee"/><stop offset="1" stop-color="#444"/></linearGradient></defs>
                            <path d="M.5 .5h73v35H.5z" fill="#aaa" stroke="#111"/>
                            <rect x="3" y="7" width="68" height="22" fill="url(#flat)"/>
                            <path d="M8.500 7v3M12.500 7v3M16.500 7v5M20.500 7v3M24.500 7v3M28.500 7v3M32.500 7v3M36.500 7v5M40.500 7v3M44.500 7v3M48.500 7v3M52.500 7v3M56.500 7v5M60.500 7v3M64.500 7v3M8.500 29v-3M12.500 29v-3M16.500 29v-5M20.500 29v-3M24.500 29v-3M28.500 29v-3M32.500 29v-3M36.500 29v-5M40.500 29v-3M44.500 29v-3M48.500 29v-3M52.500 29v-3M56.500 29v-5M60.500 29v-3M64.500 29v-3" stroke="#333"/>
                            <path d="M31 1h11l-5.500 5zM31 35h11l-5.500-5z" fill="#e01010"/>
                            <text x="18" y="21">210</text><text x="37" y="21">200</text><text x="56" y="21">190</text>
                        </svg>
                    </div>
                    <div class="dial">
                        <svg class="knob time" data-coarse="-138" data-fine="135"></svg>
                        <div class="readout"><span>ms</span><input type="text" value="0.2" aria-label="Base de temps"><span>µs</span></div>
                    </div>
                </section>

                <section class="panel b">
                    <h3>Channel B</h3>
                    <div class="controls">
                        <div class="position">
                            <span class="caption">Position</span>
                            <svg class="wheel" data-labels="-10,0,10"></svg>
                        </div>
                        <div class="coupling">
                            <div class="switch-row">
                                <div class="marks"><span>AC</span><span>DC</span><span>GND</span><span>OFF</span></div>
                                <input class="switch" type="range" min="0" max="3" value="0" aria-label="Couplage B">
                            </div>
                            <label>Invert<input type="checkbox"></label>
                        </div>
                    </div>
                    <div class="dial">
                        <svg class="knob" data-coarse="-45" data-fine="135"></svg>
                        <div class="readout"><span>V</span><input type="text" value="1" aria-label="Gain B"><span>mV</span></div>
                    </div>
                </section>

                <section class="panel d">
                    <h3>Channel D</h3>
                    <div class="controls">
                        <div class="position">
                            <span class="caption">Position</span>
                            <svg class="wheel" data-labels="-130,-120,-110"></svg>
                        </div>
                        <div class="coupling">
                            <div class="switch-row">
                                <div class="marks"><span>AC</span><span>DC</span><span>GND</span><span>OFF</span></div>
                                <input class="switch" type="range" min="0" max="3" value="0" aria-label="Couplage D">
                            </div>
                            <label>Invert<input type="checkbox"></label>
                        </div>
                    </div>
                    <div class="dial">
                        <svg class="knob" data-coarse="-22" data-fine="135"></svg>
                        <div class="readout"><span>V</span><input type="text" value="0.5" aria-label="Gain D"><span>mV</span></div>
                    </div>
                </section>
            </div>
        </div>
    </section>

    <!-- shared gradients -->
    <svg class="defs" width="0" height="0">
        <defs>
            <linearGradient id="cylinder" x2="0" y2="1"><stop offset="0" stop-color="#555"/><stop offset=".5" stop-color="#f4f4f4"/><stop offset="1" stop-color="#555"/></linearGradient>
            <radialGradient id="knobBody" cx=".35" cy=".3" r=".8"><stop offset="0" stop-color="#e4e4e4"/><stop offset=".6" stop-color="#b4b4b4"/><stop offset="1" stop-color="#707070"/></radialGradient>
            <linearGradient id="knobCap" x2="1" y2="1"><stop offset="0" stop-color="#888"/><stop offset=".5" stop-color="#fff"/><stop offset="1" stop-color="#888"/></linearGradient>
        </defs>
    </svg>

    <script src="script.js"></script>
</body>
</html>
```

FILE: styles.css
```
*, *:after, *:before {
    box-sizing: border-box;
    margin: 0;
    padding: 0;
}

:root {
    --face: #f0f0f0;
    --edge: #a0a0a0;
    --sheet: #dfe0d0;
    --task: #182430;
    --yellow: #f4ee10;
    --blue: #1488d8;
    --pink: #d81878;
    --green: #088a40;
    --orange: #f07c20;
    --narrow: Roboto, sans-serif;
}

body {
    display: flex;
    flex-direction: column;
    height: 100vh;
    overflow: hidden;
    font-family: "Open Sans", "Noto Sans", sans-serif;
    font-size: 11px;
    color: #111;
    background: var(--face);
}

button, input {
    font: inherit;
    color: inherit;
    border: 0;
    border-radius: 0;
    background: none;
}

svg {
    display: block;
    flex: none;
}

h1, h2, h3 {
    font-size: inherit;
    font-weight: normal;
}

/* title and menu */
.titlebar {
    display: flex;
    align-items: center;
    height: 23px;
    padding-left: 1px;
    background: #fff;
}

.titlebar h1 {
    flex: 1;
    padding-left: 1px;
}

.window-buttons {
    display: flex;
    padding-right: 2px;
}

.window-buttons button {
    width: 43px;
    height: 20px;
}

.window-buttons svg {
    margin: auto;
}

.menubar {
    display: flex;
    align-items: center;
    gap: 11px;
    height: 19px;
    padding: 0 7px 3px;
    background: #fff;
    border-bottom: 1px solid var(--edge);
}

/* toolbar */
.toolbar {
    display: flex;
    align-items: center;
    height: 29px;
    padding: 0 0 3px 2px;
    border-bottom: 1px solid #777;
}

.toolbar:before {
    content: "";
    width: 3px;
    height: 20px;
    border-right: 1px solid var(--edge);
}

.tools {
    display: flex;
    align-items: center;
}

.tools button {
    width: 20px;
    height: 20px;
    padding: 2px;
}

.tools button.pressed,
.mode-group button.pressed {
    background: #fafafa;
    border: 1px solid;
    border-color: #888 #fff #fff #888;
    padding: 1px;
}

.tools svg {
    width: 16px;
    height: 16px;
}

.sep {
    width: 1px;
    height: 17px;
    margin: 0 3px;
    background: #999;
}

.tight .sep {
    margin: 0 3px 0 2px;
}

.grip {
    width: 5px;
    height: 22px;
    margin: 0 5px;
    border-left: 1px solid var(--edge);
    border-right: 1px solid var(--edge);
}

/* workspace */
.workspace {
    display: flex;
    flex: 1;
    min-height: 0;
}

.modes {
    width: 28px;
}

.modes:before {
    content: "";
    display: block;
    width: 21px;
    height: 5px;
    margin-left: 2px;
    border-top: 1px solid var(--edge);
}

.mode-group {
    display: grid;
    grid-auto-rows: 1fr;
    width: 20px;
    height: 145px;
    margin-left: 1px;
}

.group-devices {
    height: 166px;
    border-top: 1px solid var(--edge);
}

.group-draw {
    height: 169px;
    padding-top: 4px;
    border-top: 1px solid var(--edge);
}

.mode-group button,
.mode-rotate button {
    display: grid;
    place-items: center;
    width: 20px;
}

.mode-group svg,
.mode-rotate svg {
    width: 15px;
    height: 15px;
}

.mode-group .glyph {
    font: bold 18px/18px "Liberation Serif", serif;
    color: #333;
}

.mode-rotate {
    width: 22px;
    margin: 6px 0 0 1px;
    padding-top: 7px;
    border-top: 1px solid var(--edge);
}

.mode-rotate button {
    height: 21px;
}

.mode-rotate input {
    display: block;
    width: 22px;
    height: 15px;
    margin: 0 0 4px;
    font: 11px var(--narrow);
    background: #fff;
    border: solid #444;
    border-width: 2px 0 0 2px;
}

.mode-rotate .after-angle {
    width: 22px;
    height: 24px;
    border-top: 1px solid var(--edge);
}

.sidebar {
    display: flex;
    flex-direction: column;
    width: 113px;
    font-family: var(--narrow);
    font-size: 11px;
}

.overview {
    border: 1px solid #888;
    background: var(--sheet);
    margin-bottom: 4px;
}

.sidebar h2 {
    height: 18px;
    border: 1px solid #777;
    background: #bccbdc;
    line-height: 16px;
    text-align: center;
}

.device-list {
    flex: 1;
    border: 1px solid #777;
    border-top: 0;
    background: #fff;
    list-style: none;
    line-height: 12px;
}

.device-list li {
    padding-left: 2px;
}

.device-list .selected {
    color: #fff;
    background: #0078d7;
}

.sheet {
    flex: 1;
    min-width: 0;
    margin: 0 4px;
    border: 1px solid #888;
    border-top: 0;
    background: var(--sheet);
    overflow: hidden;
}

/* schematic */
.schematic {
    width: 100%;
    height: 100%;
    font-family: "Liberation Sans", sans-serif;
}

.schematic path {
    fill: none;
}

.grid-minor {
    stroke: #c6c8b8;
}

.grid-major {
    stroke: #adafa0;
}

.sheet-edge {
    stroke: #2020a0;
}

.wire {
    stroke: #1c521c;
}

.node {
    fill: #0c440c;
}

.pin {
    stroke: #b42c2c;
}

.schematic .body path {
    stroke: #a03028;
    fill: #c8c8a4;
}

.schematic .hatched {
    fill: url(#hatch);
}

.generator {
    stroke: #2020b0;
}

.ref {
    font-size: 12px;
}

.value {
    font-size: 9px;
}

.prop {
    font-family: var(--narrow);
    font-size: 8px;
    fill: #808078;
}

.net {
    font-size: 9px;
    fill: #1414a8;
}

/* status bar */
.statusbar {
    display: flex;
    align-items: center;
    height: 26px;
    padding: 1px 4px 0;
    font: 10px var(--narrow);
    white-space: nowrap;
}

.grip-small {
    width: 1px;
    height: 18px;
    margin-right: 4px;
    background: var(--edge);
}

.transport {
    display: flex;
    border: 1px solid #000;
}

.transport button {
    width: 37px;
    height: 16px;
    border: 1px solid;
    border-color: #fff #333 #333 #fff;
}

.transport svg {
    margin: auto;
}

.status-box {
    display: flex;
    align-items: center;
    height: 18px;
    border: 1px solid;
    border-color: var(--edge) #fff #fff var(--edge);
}

.messages {
    gap: 9px;
    width: 92px;
    margin-left: 3px;
    padding-left: 2px;
}

.animation {
    flex: 1;
    padding-left: 1px;
    color: #145014;
}

.coords {
    width: 117px;
}

/* taskbar */
.taskbar {
    display: flex;
    height: 37px;
    color: #fff;
    background: var(--task);
}

.start {
    width: 45px;
}

.start svg {
    margin: auto;
}

.search {
    display: flex;
    align-items: center;
    width: 322px;
    padding-left: 11px;
    background: #f2f2f2;
    border-top: 1px solid #bbb;
}

.search input {
    flex: 1;
    min-width: 0;
    padding-left: 10px;
    font-size: 13px;
}

.search input::placeholder {
    color: #333;
    opacity: 1;
}

.apps {
    display: flex;
    width: 604px;
}

.apps button {
    flex: 1;
    padding-top: 2px;
}

.apps .wide {
    flex: none;
    width: 46px;
}

.apps svg {
    width: 24px;
    height: 24px;
    margin: auto;
}

.apps .running {
    background: linear-gradient(#76b9ed, #76b9ed) center bottom / 31px 2px no-repeat;
}

.apps .current {
    background-color: #3f4852;
    background-size: 39px 2px;
}

.tray {
    display: flex;
    align-items: center;
    flex: 1;
    justify-content: flex-end;
    gap: 16px;
}

.weather {
    display: flex;
    align-items: center;
    gap: 6px;
    font-size: 12px;
}

.clock {
    display: grid;
    justify-items: center;
    line-height: 17px;
}

.notifications {
    margin-right: 16px;
    font-size: 11px;
}

.notifications text {
    fill: #fff;
}

/* oscilloscope window */
.scope {
    position: absolute;
    left: 61px;
    top: 325px;
    width: 644px;
    background: #fff;
    box-shadow: 0 1px 6px 1px rgba(0, 0, 0, 0.5);
    font-family: "Liberation Sans", sans-serif;
    font-size: 9px;
    color: #222;
}

.scope-title {
    display: flex;
    align-items: center;
    justify-content: space-between;
    height: 23px;
    padding: 0 1px 0 2px;
    font-family: "Open Sans", sans-serif;
    font-size: 11px;
}

.scope-title button {
    width: 19px;
    height: 19px;
    background: #c84850;
}

.scope-title svg {
    margin: auto;
}

.scope-body {
    display: flex;
    height: 396px;
}

.display {
    flex: 1;
    border: 1px solid #555;
    border-top-width: 2px;
    border-right-width: 2px;
    background: #e8e8e8;
}

.trace {
    width: 100%;
    height: 376px;
    background: #000;
}

.scrollbar {
    display: flex;
    height: 15px;
    margin-top: 2px;
    background: #fff;
}

.scrollbar button,
.scrollbar .thumb {
    border: 1px solid;
    border-color: #fff #444 #444 #fff;
    background: var(--face);
}

.scrollbar button {
    width: 15px;
}

.scrollbar svg {
    margin: auto;
}

.scrollbar .thumb {
    flex: 1;
}

.panels {
    display: grid;
    grid-template-columns: repeat(3, 88px);
    grid-template-rows: 198px 198px;
}

.panel {
    display: flex;
    flex-direction: column;
    border-right: 2px solid #333;
    border-left: 1px solid #ddd;
    border-bottom: 1px solid #555;
    background: #a6a6a6;
}

.panel h3 {
    height: 25px;
    border-bottom: 1px solid #222;
    font-size: 11px;
    font-weight: bold;
    line-height: 27px;
    text-align: center;
}

.panel.a, b.a { color: var(--yellow); }
.panel.b, b.b { color: var(--blue); }
.panel.c, b.c { color: var(--pink); }
.panel.d, b.d { color: var(--green); }
.panel.trigger { color: #f09090; }
.panel.horizontal { color: var(--orange); }

.controls {
    display: flex;
    justify-content: space-between;
    height: 88px;
    padding-right: 1px;
}

.caption {
    color: #222;
    line-height: 11px;
}

.position {
    display: flex;
    flex-direction: column;
    width: 47px;
    padding-top: 2px;
}

.position .caption {
    padding-left: 8px;
    text-align: center;
    white-space: nowrap;
}

.wheel {
    width: 46px;
    height: 74px;
    font-size: 9px;
}

.wheel text,
.wheel-flat text {
    fill: #111;
    text-anchor: middle;
}

.coupling {
    display: flex;
    flex-direction: column;
    align-items: flex-end;
    color: #222;
    margin-left: -10px;
}

.switch-row {
    display: flex;
    gap: 2px;
    padding-top: 2px;
}

.switch-row.edge {
    align-items: center;
    padding-top: 10px;
}

.marks {
    display: grid;
    grid-auto-rows: 13px;
    padding-top: 4px;
    text-align: right;
}

.switch {
    writing-mode: vertical-lr;
    -webkit-appearance: none;
    appearance: none;
    width: 13px;
    height: 60px;
    padding: 1px;
    border: 1px solid #222;
    background: linear-gradient(#000, #000) center / 2px 80% no-repeat #b8b8b8;
}

.switch.short {
    height: 32px;
}

.switch::-webkit-slider-thumb {
    -webkit-appearance: none;
    width: 9px;
    height: 14px;
    border: 1px solid #555;
    background: repeating-linear-gradient(#eee 0 2px, #777 2px 3px);
}

.panel label {
    display: flex;
    align-items: center;
    justify-content: flex-end;
    gap: 2px;
    height: 15px;
    color: #222;
    font-size: 9px;
}

.panel input[type="checkbox"] {
    -webkit-appearance: none;
    appearance: none;
    width: 13px;
    height: 13px;
    border: 1px solid #333;
    background: linear-gradient(135deg, #aaa, #333);
}

.panel input[type="checkbox"]:checked {
    background: linear-gradient(135deg, #fff, #f8b0b0);
}

.trigger-modes {
    padding-right: 1px;
    margin-top: -2px;
}

.source,
.timebase {
    display: flex;
    flex-direction: column;
    align-items: center;
    padding-top: 6px;
}

.letters {
    display: flex;
    align-items: center;
    gap: 7px;
    font-size: 8px;
    line-height: 9px;
}

.source-slider {
    -webkit-appearance: none;
    appearance: none;
    width: 58px;
    height: 13px;
    padding: 1px;
    margin-top: 1px;
    border: 1px solid #222;
    background: linear-gradient(#000, #000) center / 80% 2px no-repeat #b8b8b8;
}

.source-slider.long {
    width: 74px;
    margin: 2px 0;
}

.source-slider::-webkit-slider-thumb {
    -webkit-appearance: none;
    width: 14px;
    height: 9px;
    border: 1px solid #555;
    background: repeating-linear-gradient(90deg, #eee 0 2px, #777 2px 3px);
}

.timebase {
    height: 88px;
    padding-top: 4px;
}

.dial {
    display: grid;
}

.dial > * {
    grid-area: 1 / 1;
}

.knob {
    width: 85px;
    height: 84px;
    font-size: 8px;
}

.knob.time {
    font-size: 7px;
}

.knob text {
    fill: #222;
    text-anchor: middle;
}

.knob .slot {
    stroke: #777;
    stroke-width: 3px;
}

.readout {
    display: grid;
    grid-template-columns: 26px 33px 26px;
    align-self: end;
    align-items: center;
    color: #222;
    text-align: center;
}

.readout input {
    height: 13px;
    padding-left: 1px;
    border: 1px solid #333;
    background: #fff;
    color: #202080;
}

.defs {
    position: absolute;
}
```

FILE: script.js
```
// builds one path of parallel lines
function gridLines(from, to, step, draw) {
    let d = '';
    for (let p = from; p < to; p += step) {
        d += draw(Math.floor(p) + 0.5);
    }
    return d;
}

// sheet grid, every tenth line is darker
const sheetSize = document.querySelector('#schematic').getBoundingClientRect();
const right = 146 + sheetSize.width;
const bottom = 71 + sheetSize.height;
const vertical = (x) => `M${x} 71V${bottom}`;
const horizontal = (y) => `M146 ${y}H${right}`;

document.querySelector('#gridMinor').setAttribute('d',
    gridLines(153.9, right, 9.92, vertical) + gridLines(73.2, bottom, 9.92, horizontal));
document.querySelector('#gridMajor').setAttribute('d',
    gridLines(223.3, right, 99.2, vertical) + gridLines(132.7, bottom, 99.2, horizontal));

// scope screen, 20 x 20 divisions
document.querySelector('#scopeGrid').setAttribute('d',
    gridLines(62, 439, 18.8, (x) => `M${x} 350V726`) + gridLines(350.5, 727, 18.8, (y) => `M62 ${y}H438`));

// thumb wheels
document.querySelectorAll('.wheel').forEach((wheel) => {
    let ticks = '';
    for (let y = 5; y < 70; y += 4) {
        ticks += `M18 ${y + 0.5}h2M39 ${y + 0.5}h-2`;
    }
    const labels = wheel.dataset.labels.split(',').map((label, i) =>
        `<text x="28" y="${20 + i * 19}">${label}</text>`).join('');
    wheel.innerHTML = `
        <path d="M10.500 .5h35v73h-35z" fill="#aaa" stroke="#111"/>
        <rect x="17" y="3" width="23" height="68" fill="url(#cylinder)"/>
        <path d="${ticks}" stroke="#333"/>
        <path d="M11 31v10l5-5zM45 31v10l-5-5z" fill="#e01010"/>
        <path d="M4.500 27v18" stroke="currentColor" stroke-width="1.500"/>
        <path d="M1 31l3.500-5 3.500 5zM1 41l3.500 5 3.500-5z" fill="currentColor"/>
        ${labels}`;
});

// rotary knobs
const VOLT_SCALE = [['20', -29, 28], ['10', -35, 17], ['5', -38, 3], ['2', -35, -10], ['1', -27, -23], ['0.5', -15, -31],
    ['0.2', 0, -33], ['0.1', 12, -31], ['50', 27, -22], ['20', 35, -10], ['10', 36, 3], ['5', 34, 17], ['2', 26, 28]];
const TIME_SCALE = [['200', -27, 29], ['100', -34, 21], ['50', -36, 12], ['20', -36, 2], ['10', -35, -8], ['5', -31, -17],
    ['2', -24, -25], ['1', -15, -31], ['0.5', -5, -34], ['0.2', 6, -34], ['0.1', 15, -28], ['50', 26, -23],
    ['20', 32, -16], ['10', 35, -8], ['5', 37, 3], ['2', 37, 12], ['1', 34, 22], ['0.5', 27, 29]];

document.querySelectorAll('.knob').forEach((knob) => {
    const scale = knob.classList.contains('time') ? TIME_SCALE : VOLT_SCALE;
    const labels = scale.map(([label, x, y]) => `<text x="${x}" y="${y}">${label}</text>`).join('');
    let ticks = '';
    for (let a = -130; a <= 130; a += 20) {
        ticks += `<path d="M0-27v-4" transform="rotate(${a})" stroke="#222"/>`;
    }
    knob.innerHTML = `
        <g transform="translate(42 42)">
            <path d="M-41.500 42V0a41.500 41.500 0 0 1 83 0v42z" fill="#fff" stroke="#333"/>
            ${ticks}
            <path class="slot" d="M14-24l7-12"/>
            ${labels}
            <circle r="27" fill="url(#knobBody)" stroke="#777"/>
            <circle r="14" fill="url(#knobCap)" stroke="#555"/>
            <path d="M0-24l5 8h-10z" transform="rotate(${knob.dataset.coarse})" fill="currentColor"/>
            <path d="M0-13l4 6h-8z" transform="rotate(${knob.dataset.fine})" fill="currentColor"/>
        </g>`;
});
```
